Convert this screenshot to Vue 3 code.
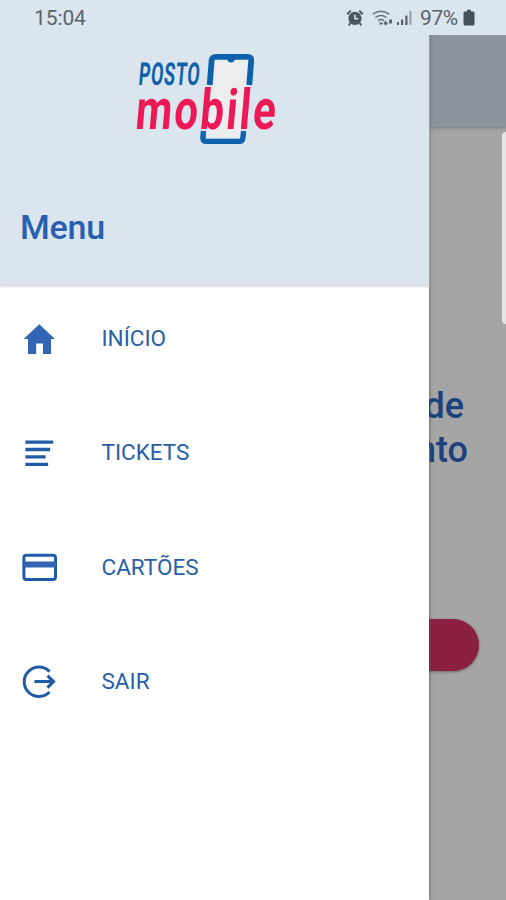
<script setup>
const items = [
  { id: 'home', label: 'INÍCIO' },
  { id: 'tickets', label: 'TICKETS' },
  { id: 'cards', label: 'CARTÕES' },
  { id: 'exit', label: 'SAIR' },
]
</script>

<template>
  <div class="screen">
    <header class="status">
      <span class="time">15:04</span>
      <div class="indicators">
        <svg class="alarm" width="18" height="18" viewBox="0 0 18 18">
          <circle cx="9" cy="9.400" r="5.900" fill="#4b555e" stroke="#4b555e" stroke-width="1.400" />
          <path d="M9 5.800v4h3.200" fill="none" stroke="#dbe4ec" stroke-width="1.600" />
          <path d="M1.200 5.200 4.800 1.800M16.800 5.200l-3.600-3.400M4.400 14l-1.600 2.400M13.600 14l1.600 2.400" stroke="#4b555e" stroke-width="2" />
        </svg>
        <svg class="wifi" width="22" height="18" viewBox="0 0 22 18">
          <g fill="none" stroke="#68727b" stroke-width="1.500">
            <path d="M.8 5.200q8.200-6 16.400 0M3.400 8.500q5.600-4.200 11.200 0M6 11.800q3-2.400 6 0" />
          </g>
          <path d="M7.500 13.500h3v2h-3zM11.500 14.500l2.200-3 2.200 3-2.200 2zM17 10.500h3v4h-3z" fill="#59636c" />
        </svg>
        <svg class="signal" width="16" height="18" viewBox="0 0 16 18">
          <path d="M0 13h2v3H0zM4 10.500h2.200V16H4zM8.300 6.500h2.200V16H8.300z" fill="#59636c" />
          <path d="M12.300 2h2.200v14h-2.200z" fill="#98a2ab" />
        </svg>
        <span class="percent">97%</span>
        <svg class="battery" width="12" height="18" viewBox="0 0 12 18">
          <path d="M4 .8h4v1.800h2.200q1.300 0 1.300 1.300v11.300q0 1.300-1.300 1.300H1.800Q.5 16.500.5 15.200V3.900Q.5 2.600 1.800 2.600H4z" fill="#47515a" />
        </svg>
      </div>
    </header>

    <main class="page">
      <div class="toolbar"></div>
      <div class="content">
        <div class="handle"></div>
        <p class="headline"><span>de</span><span>nto</span></p>
        <div class="action"></div>
      </div>
    </main>

    <aside class="drawer">
      <div class="brand">
        <svg class="logo" width="150" height="96" viewBox="130 51 150 96">
          <path d="M214 60h34l-7 77h-34z" fill="#ebedef" />
          <path d="M209.700 85 211.600 60.800q.4-4 4.400-4h31.800q3.700 0 3.400 3.700L249.300 85" fill="none" stroke="#0d61ad" stroke-width="5.800" />
          <path d="M227 59h8q-1 3.600-4 3.600t-4-3.600z" fill="#0d61ad" />
          <path d="m203.500 131-.6 6.400q-.4 4 3.400 4h33q3.200 0 3.600-3.400l.7-7" fill="none" stroke="#0d61ad" stroke-width="5.400" />
          <g transform="translate(138 85) skewX(-5) scale(.57 1)">
            <text class="posto">POSTO</text>
          </g>
          <g transform="translate(134.500 129) skewX(-5) scale(.75 1)">
            <text class="mobile">mobile</text>
          </g>
        </svg>
        <h1>Menu</h1>
      </div>
      <nav>
        <a v-for="item in items" :key="item.id" class="item">
          <svg class="icon" width="38" height="38" viewBox="0 0 38 38">
            <path v-if="item.id === 'home'" d="M19.300 5.300 3.600 20H8v15h8.200V24.500H23V35h8V20h4z" fill="#3265b3" />
            <path v-else-if="item.id === 'tickets'" d="M7 9.200h24.500M7 16.500h21.500M7 23.900h17M7 31.300h19.500" fill="none" stroke="#205ba8" stroke-width="3.300" stroke-linecap="square" />
            <g v-else-if="item.id === 'cards'">
              <rect x="3.900" y="7.300" width="31.600" height="24.300" rx="2.500" fill="none" stroke="#205ba8" stroke-width="3" />
              <path d="M4 13.500h32v6H4z" fill="#3265b3" />
            </g>
            <g v-else fill="none" stroke="#205ba8" stroke-width="3">
              <path d="M29.500 9.600a14.700 14.700 0 1 0 0 20.400" />
              <path d="M14.500 19.600h19M27.500 13.600l6 6-6 6" />
            </g>
          </svg>
          <span class="label">{{ item.label }}</span>
        </a>
      </nav>
    </aside>
  </div>
</template>

<style>
body {
  margin: 0;
}
</style>

<style scoped>
.screen {
  position: relative;
  display: flex;
  flex-direction: column;
  width: 506px;
  height: 900px;
  overflow: hidden;
  background: #a5a5a5;
  font-family: Roboto, sans-serif;
}
.status {
  display: flex;
  flex: none;
  justify-content: space-between;
  height: 35px;
  box-sizing: border-box;
  padding: 0 31px 0 34px;
  background: #dbe5ed;
  color: #59636c;
  position: relative;
  z-index: 3;
}
.time,
.percent {
  font-size: 21px;
  line-height: 36px;
}
.time {
  letter-spacing: -0.100px;
}
.indicators {
  display: flex;
  align-items: center;
}
.wifi {
  margin-left: 8px;
}
.signal {
  margin-left: 3px;
}
.percent {
  margin-left: 7px;
  margin-right: 4px;
  width: 39px;
  white-space: nowrap;
  letter-spacing: -0.400px;
}
.page {
  flex: 1;
  display: flex;
  flex-direction: column;
}
.toolbar {
  height: 92px;
  background: #8c949e;
  box-shadow: 0 1px 3px #777;
}
.content {
  flex: 1;
  display: flex;
  flex-direction: column;
  align-items: flex-end;
}
.handle {
  width: 4px;
  height: 192px;
  margin-top: 5px;
  border-radius: 6px 0 0 6px;
  background: #e5e5e5;
}
.headline {
  display: flex;
  flex-direction: column;
  align-items: flex-end;
  margin: 60px 38px 0 0;
  color: #1a427e;
  font-size: 36px;
  font-weight: 500;
  line-height: 44px;
}
.headline span:first-child {
  margin-right: 4px;
}
.action {
  width: 100px;
  height: 52px;
  margin: 147px 27px 0 0;
  border-radius: 26px;
  background: #8c2041;
  box-shadow: 0 1px 3px #666;
}
.drawer {
  position: absolute;
  z-index: 2;
  left: 0;
  top: 35px;
  width: 429px;
  height: 865px;
  background: #fff;
  box-shadow: 0 0 4px #555;
}
.brand {
  box-sizing: border-box;
  height: 251px;
  padding-top: 16px;
  background: #dbe5ed;
  border-bottom: 2px solid #dbdde0;
  box-shadow: 0 1px 2px #ddd;
}
.logo {
  display: block;
  margin-left: 130px;
  overflow: visible;
}
.posto,
.mobile {
  font-family: Roboto, sans-serif;
  font-weight: 700;
}
.posto {
  font-size: 31.500px;
  letter-spacing: 1.200px;
  fill: #0d61ad;
}
.mobile {
  font-size: 56px;
  letter-spacing: 3px;
  fill: #ed1856;
}
h1 {
  margin: 60px 0 0 20px;
  color: #2860b0;
  font-size: 34px;
  font-weight: 500;
  line-height: 40px;
  letter-spacing: -0.200px;
}
nav {
  padding-top: 14px;
}
.item {
  display: flex;
  align-items: center;
  height: 76px;
  margin-bottom: 38.400px;
  padding-left: 20px;
  color: #2860a8;
}
.label {
  margin-left: 43.500px;
  font-size: 22.500px;
  line-height: 30px;
}
</style>
